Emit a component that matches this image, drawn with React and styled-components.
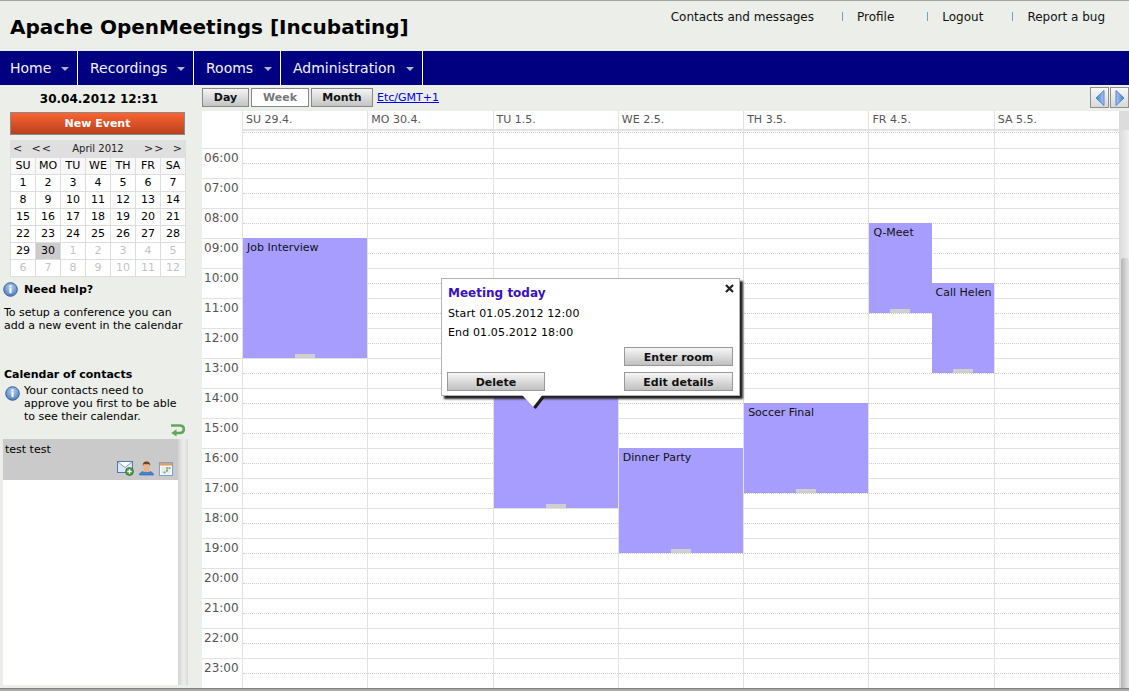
import React from 'react'
import styled, { createGlobalStyle } from 'styled-components'

const GlobalStyle = createGlobalStyle`
    html, body { margin:0; padding:0; height:100%; overflow:hidden; }
    body { font-family:"DejaVu Sans", Verdana, sans-serif; font-size:11px; color:#000; background:#eceee9; }
    * { box-sizing:border-box; }
`

const navItems = [
    { label: 'Home', width: 78, pad: 10 },
    { label: 'Recordings', width: 116, pad: 12 },
    { label: 'Rooms', width: 87, pad: 12 },
    { label: 'Administration', width: 142, pad: 12 },
]
const topLinks = [
    { label: 'Contacts and messages', gap: 0 },
    { label: 'Profile', gap: 28 },
    { label: 'Logout', gap: 33 },
    { label: 'Report a bug', gap: 29 },
]
const hours = ['06:00','07:00','08:00','09:00','10:00','11:00','12:00','13:00','14:00','15:00','16:00','17:00','18:00','19:00','20:00','21:00','22:00','23:00']
const dayNames = ['SU 29.4.','MO 30.4.','TU 1.5.','WE 2.5.','TH 3.5.','FR 4.5.','SA 5.5.']
const miniHead = ['SU','MO','TU','WE','TH','FR','SA']
const miniDays = [
    1,2,3,4,5,6,7,8,9,10,11,12,13,14,15,16,17,18,19,20,21,22,23,24,25,26,27,28,29,30,
    1,2,3,4,5,6,7,8,9,10,11,12,
]
const events = {
    0: [{ title: 'Job Interview', top: 107, height: 120 }],
    2: [{ title: '', top: 257, height: 120 }],
    3: [{ title: 'Dinner Party', top: 317, height: 105 }],
    4: [{ title: 'Soccer Final', top: 272, height: 90 }],
    5: [
        { title: 'Q-Meet', top: 92, height: 90, half: 'left' },
        { title: 'Call Helen', top: 152, height: 90, half: 'right' },
    ],
}

function InfoIcon() {
    return (
        <svg width="15" height="15" viewBox="0 0 15 15">
            <defs>
                <radialGradient id="infoFill" cx="50%" cy="35%" r="70%">
                    <stop offset="0" stopColor="#b9d2f0" />
                    <stop offset="1" stopColor="#3f74b8" />
                </radialGradient>
            </defs>
            <circle cx="7.5" cy="7.5" r="6.8" fill="url(#infoFill)" stroke="#3a659f" />
            <rect x="6.5" y="6.2" width="2" height="5" fill="#fff" />
            <rect x="6.5" y="3.4" width="2" height="1.8" fill="#fff" />
        </svg>
    )
}

function ReturnIcon() {
    return (
        <svg width="15" height="14" viewBox="0 0 15 14">
            <path d="M1 2.5h9c2.4 0 3.8 1.6 3.8 3.8S12.4 10 10 10H5.5" fill="none" stroke="#5fa85a" strokeWidth="2.6" />
            <path d="M6.5 6.2v7.4L1.2 10z" fill="#5fa85a" />
        </svg>
    )
}

function MailAddIcon() {
    return (
        <svg width="17" height="15" viewBox="0 0 17 15">
            <rect x="0.5" y="0.5" width="15" height="11" fill="#dce8f8" stroke="#4f78b4" />
            <path d="M1 1l7 5.5L15 1" fill="#fff" stroke="#7fa2d0" />
            <circle cx="12.5" cy="10.5" r="4" fill="#4b9a45" stroke="#2f6f2f" strokeWidth="0.7" />
            <path d="M10.3 10.5h4.4M12.5 8.3v4.4" stroke="#fff" strokeWidth="1.3" />
        </svg>
    )
}

function PersonIcon() {
    return (
        <svg width="15" height="15" viewBox="0 0 15 15">
            <path d="M0.5 14c0-1.8 1.6-2.6 3-3.4 1 1.4 7 1.4 8 0 1.4.8 3 1.6 3 3.4z" fill="#3f86e6" stroke="#2a5c9e" strokeWidth="0.6" />
            <rect x="5" y="8" width="5" height="3" fill="#e4b08a" />
            <circle cx="7.5" cy="5.2" r="3.4" fill="#e8b48a" />
            <path d="M3.8 5C3.6 1.6 5.4.6 7.5.6s3.9 1 3.7 4.4c-.6-1.4-1.2-1.9-2-2-1.4.4-3.2.4-4.2 0-.5.4-.9 1-1.2 2z" fill="#6f4220" />
        </svg>
    )
}

function CalendarIcon() {
    return (
        <svg width="14" height="14" viewBox="0 0 14 14">
            <rect x="0.5" y="0.5" width="13" height="13" fill="#f7f9fc" stroke="#7ba0d0" />
            <rect x="1" y="1" width="12" height="2.6" fill="#e0a060" />
            <path d="M2.5 5h9v6.5h-9z" fill="#e6ebf2" />
            <rect x="7" y="5" width="2" height="2" fill="#d9a45f" />
            <rect x="9.5" y="5" width="2" height="2" fill="#7fb27f" />
            <rect x="7" y="7.5" width="2" height="2" fill="#6fa86f" />
            <rect x="4.5" y="9.5" width="2" height="2" fill="#7fb27f" />
        </svg>
    )
}

function PagerArrow({ left }) {
    return (
        <svg width="12" height="16" viewBox="0 0 12 16">
            <defs>
                <linearGradient id={left ? 'pagerL' : 'pagerR'} x1="0" y1="0" x2="1" y2="0">
                    <stop offset="0" stopColor={left ? '#3f7fd4' : '#a8c8f0'} />
                    <stop offset="1" stopColor={left ? '#a8c8f0' : '#3f7fd4'} />
                </linearGradient>
            </defs>
            <path d={left ? 'M10 .5v15L2 8z' : 'M2 .5v15L10 8z'} fill={`url(#${left ? 'pagerL' : 'pagerR'})`} stroke="#4f86cc" />
        </svg>
    )
}

function CloseIcon() {
    return (
        <svg width="9" height="9" viewBox="0 0 9 9">
            <path d="M1 1l7 7M8 1L1 8" stroke="#222" strokeWidth="2.2" />
        </svg>
    )
}

function TailIcon() {
    return (
        <svg width="26" height="16" viewBox="0 0 26 16">
            <path d="M21 2L12.5 13" stroke="#1c1c1c" strokeWidth="3" fill="none" />
            <path d="M0 0h20.5L11 11.5z" fill="#fff" />
        </svg>
    )
}

function App() {
    return (
        <Page>
            <GlobalStyle />
            <TopLine />
            <Header>
                <Title>Apache OpenMeetings [Incubating]</Title>
                <TopLinks>
                    {topLinks.map(link => (
                        <TopLink key={link.label} $gap={link.gap}>{link.label}</TopLink>
                    ))}
                </TopLinks>
            </Header>
            <Nav>
                {navItems.map(item => (
                    <NavItem key={item.label} $width={item.width} $pad={item.pad}>
                        {item.label}
                        <Caret />
                    </NavItem>
                ))}
            </Nav>
            <Body>
                <Sidebar>
                    <Clock>30.04.2012 12:31</Clock>
                    <NewEvent>New Event</NewEvent>
                    <MiniCal>
                        <MiniHeader>
                            <span>&lt;</span>
                            <span>&lt;&lt;</span>
                            <MiniMonth>April 2012</MiniMonth>
                            <span>&gt;&gt;</span>
                            <span>&gt;</span>
                        </MiniHeader>
                        <MiniGrid>
                            {miniHead.map(d => <MiniHeadCell key={d}>{d}</MiniHeadCell>)}
                            {miniDays.map((d, i) => (
                                <MiniCell key={i} $muted={i >= 30} $today={i === 29}>{d}</MiniCell>
                            ))}
                        </MiniGrid>
                    </MiniCal>
                    <HelpRow>
                        <InfoIcon />
                        <strong>Need help?</strong>
                    </HelpRow>
                    <HelpText>To setup a conference you can add a new event in the calendar</HelpText>
                    <ContactsTitle>Calendar of contacts</ContactsTitle>
                    <ContactsInfo>
                        <InfoIcon />
                        <span>Your contacts need to approve you first to be able to see their calendar.</span>
                    </ContactsInfo>
                    <ReturnRow><ReturnIcon /></ReturnRow>
                    <ContactBox>
                        <ContactList>
                            <ContactRow>
                                test test
                                <ContactIcons>
                                    <MailAddIcon />
                                    <PersonIcon />
                                    <CalendarIcon />
                                </ContactIcons>
                            </ContactRow>
                        </ContactList>
                        <ContactScroll />
                    </ContactBox>
                </Sidebar>
                <Main>
                    <Toolbar>
                        <ViewButton $width={47}>Day</ViewButton>
                        <ViewButton $width={58} $active>Week</ViewButton>
                        <ViewButton $width={62}>Month</ViewButton>
                        <ZoneLink>Etc/GMT+1</ZoneLink>
                        <Pager>
                            <PagerButton><PagerArrow left /></PagerButton>
                            <PagerButton><PagerArrow /></PagerButton>
                        </Pager>
                    </Toolbar>
                    <CalendarWrap>
                        <Calendar>
                            <DayHeaders>
                                <TimeHeaderGap />
                                {dayNames.map(d => <DayHeader key={d}>{d}</DayHeader>)}
                            </DayHeaders>
                            <Grid>
                                <TimeColumn>
                                    <TimeStub />
                                    {hours.map(h => <TimeCell key={h}>{h}</TimeCell>)}
                                </TimeColumn>
                                {dayNames.map((d, i) => (
                                    <DayColumn key={d}>
                                        <StubCell />
                                        {hours.map(h => <HourCell key={h} />)}
                                        {(events[i] || []).map(ev => (
                                            <Event key={ev.top} $top={ev.top} $height={ev.height} $half={ev.half}>
                                                {ev.title}
                                                <Handle />
                                            </Event>
                                        ))}
                                    </DayColumn>
                                ))}
                            </Grid>
                            <Popup>
                                <PopupClose><CloseIcon /></PopupClose>
                                <PopupTitle>Meeting today</PopupTitle>
                                <PopupLine>Start 01.05.2012 12:00</PopupLine>
                                <PopupLine>End 01.05.2012 18:00</PopupLine>
                                <PopupActions>
                                    <DeleteButton $width={98}>Delete</DeleteButton>
                                    <ActionStack>
                                        <ActionButton $width={109}>Enter room</ActionButton>
                                        <ActionButton $width={109}>Edit details</ActionButton>
                                    </ActionStack>
                                </PopupActions>
                                <PopupTail><TailIcon /></PopupTail>
                            </Popup>
                        </Calendar>
                        <Scrollbar>
                            <ScrollCap />
                            <ScrollTrack>
                                <ScrollThumb />
                            </ScrollTrack>
                        </Scrollbar>
                    </CalendarWrap>
                </Main>
            </Body>
            <BottomStrip />
        </Page>
    )
}

export default App

const Page = styled.div`
    width:1129px;
    height:691px;
    display:flex;
    flex-direction:column;
    overflow:hidden;
    background:#eceee9;
`

const TopLine = styled.div`
    height:1px;
    background:#a5a5a5;
`

const Header = styled.div`
    height:50px;
    display:flex;
    justify-content:space-between;
    align-items:flex-start;
    padding:0 24px 0 10px;
`

const Title = styled.h1`
    margin:14px 0 0;
    font-size:20px;
    line-height:24px;
    font-weight:bold;
    white-space:nowrap;
`

const TopLinks = styled.div`
    display:flex;
    padding-top:9px;
`

const TopLink = styled.div`
    font-size:12px;
    line-height:14px;
    color:#111;
    white-space:nowrap;
    margin-left:${p => p.$gap}px;
    padding-left:${p => (p.$gap ? '15px' : '0')};
    position:relative;
    &::before {
        content:'';
        display:${p => (p.$gap ? 'block' : 'none')};
        position:absolute;
        left:0;
        top:2px;
        width:1px;
        height:9px;
        background:#6f9fd0;
    }
`

const Nav = styled.div`
    height:34px;
    display:flex;
    background:#000080;
`

const NavItem = styled.div`
    width:${p => p.$width}px;
    height:34px;
    padding-left:${p => p.$pad}px;
    border-right:1px solid #fff;
    color:#f2f2f8;
    font-size:14px;
    line-height:34px;
    position:relative;
    white-space:nowrap;
`

const Caret = styled.span`
    position:absolute;
    right:8px;
    top:16px;
    border-left:4px solid transparent;
    border-right:4px solid transparent;
    border-top:4px solid #b4b4c8;
`

const Body = styled.div`
    flex:1;
    display:flex;
    min-height:0;
`

const Sidebar = styled.div`
    width:202px;
    display:flex;
    flex-direction:column;
    padding-left:3px;
    height:100%;
`

const Clock = styled.div`
    width:194px;
    height:26px;
    margin-bottom:1px;
    padding-top:1px;
    font-size:12px;
    font-weight:bold;
    line-height:26px;
    text-align:center;
    margin-left:-1px;
`

const NewEvent = styled.div`
    width:175px;
    height:23px;
    margin-left:7px;
    border:1px solid #8a8a8a;
    background:linear-gradient(#fb6431, #b8401c);
    color:#fff;
    font-size:11px;
    font-weight:bold;
    line-height:21px;
    text-align:center;
`

const MiniCal = styled.div`
    width:176px;
    margin:5px 0 0 7px;
`

const MiniHeader = styled.div`
    height:18px;
    background:#dfdfdf;
    color:#222;
    font-size:11px;
    line-height:17px;
    display:flex;
    justify-content:space-between;
    padding:0 3px;
    letter-spacing:1px;
`

const MiniMonth = styled.span`
    font-size:10px;
    letter-spacing:0;
    margin:0 12px;
`

const MiniGrid = styled.div`
    display:grid;
    grid-template-columns:repeat(7, 1fr);
    gap:1px;
    padding:0 1px 1px;
    background:#dedede;
`

const MiniHeadCell = styled.div`
    height:16px;
    background:#f8f8f8;
    font-size:11px;
    line-height:16px;
    text-align:center;
`

const MiniCell = styled.div`
    height:16px;
    background:${p => (p.$today ? '#cccccc' : '#fff')};
    color:${p => (p.$muted ? '#c4c4c4' : '#000')};
    font-size:11px;
    line-height:16px;
    text-align:center;
`

const HelpRow = styled.div`
    display:flex;
    align-items:center;
    gap:6px;
    height:15px;
    margin-top:5px;
    font-size:11px;
`

const HelpText = styled.div`
    width:186px;
    margin:9px 0 0 1px;
    font-size:11px;
    line-height:13px;
`

const ContactsTitle = styled.div`
    margin:36px 0 0 1px;
    font-size:11px;
    font-weight:bold;
    line-height:13px;
`

const ContactsInfo = styled.div`
    display:flex;
    gap:4px;
    align-items:flex-start;
    margin:3px 0 0 2px;
    font-size:11px;
    line-height:13px;
    width:180px;
    svg { flex:none; margin-top:2px; }
`

const ReturnRow = styled.div`
    width:182px;
    height:14px;
    display:flex;
    justify-content:flex-end;
    align-items:flex-end;
`

const ContactBox = styled.div`
    width:185px;
    height:246px;
    margin-top:2px;
    display:flex;
`

const ContactList = styled.div`
    width:175px;
    background:#fff;
`

const ContactRow = styled.div`
    height:41px;
    background:#cacaca;
    padding:4px 2px;
    font-size:11px;
    line-height:13px;
    position:relative;
`

const ContactIcons = styled.div`
    position:absolute;
    right:5px;
    bottom:4px;
    display:flex;
    gap:5px;
    align-items:flex-end;
`

const ContactScroll = styled.div`
    width:10px;
    background:linear-gradient(90deg, #d4d4d4, #eeeeee 60%, #dadada);
`

const Main = styled.div`
    flex:1;
    display:flex;
    flex-direction:column;
    min-width:0;
`

const Toolbar = styled.div`
    height:26px;
    display:flex;
    align-items:flex-start;
    padding-top:3px;
    gap:2px;
`

const ViewButton = styled.div`
    width:${p => p.$width}px;
    height:19px;
    border:1px solid #888;
    background:${p => (p.$active ? '#fff' : 'linear-gradient(#f4f4f4, #c4c4c4)')};
    color:${p => (p.$active ? '#777' : '#111')};
    font-size:11px;
    font-weight:bold;
    line-height:17px;
    text-align:center;
`

const ZoneLink = styled.a`
    margin-left:2px;
    color:#0000ee;
    font-size:11px;
    line-height:14px;
    margin-top:3px;
    text-decoration:underline;
`

const Pager = styled.div`
    margin-left:auto;
    margin-top:-1px;
    display:flex;
    gap:1px;
`

const PagerButton = styled.div`
    width:19px;
    height:21px;
    border:1px solid #8f8f8f;
    background:linear-gradient(#f8f8f8, #d8d8d8);
    display:flex;
    align-items:center;
    justify-content:center;
`

const CalendarWrap = styled.div`
    flex:1;
    display:flex;
    min-height:0;
`

const Calendar = styled.div`
    width:917px;
    background:#fff;
    position:relative;
    overflow:hidden;
    color:#555;
`

const DayHeaders = styled.div`
    height:20px;
    display:grid;
    grid-template-columns:40px repeat(7, 1fr);
    border-bottom:2px solid #e2e2e2;
`

const TimeHeaderGap = styled.div`
    background:#fff;
    margin-bottom:-2px;
`

const DayHeader = styled.div`
    padding-left:3px;
    border-left:1px solid #e2e2e2;
    font-size:11px;
    line-height:18px;
    color:#555;
`

const Grid = styled.div`
    display:grid;
    grid-template-columns:40px repeat(7, 1fr);
`

const TimeColumn = styled.div`
    display:flex;
    flex-direction:column;
`

const TimeStub = styled.div`
    height:18px;
    border-bottom:1px solid #e2e2e2;
`

const TimeCell = styled.div`
    height:30px;
    padding:2px 0 0 2px;
    border-bottom:1px solid #e2e2e2;
    font-size:12px;
    line-height:14px;
    color:#555;
`

const DayColumn = styled.div`
    position:relative;
    border-left:1px solid #e2e2e2;
`

const StubCell = styled.div`
    height:18px;
    border-bottom:1px solid #e2e2e2;
    padding-top:1px;
    &::before {
        content:'';
        display:block;
        border-top:1px dotted #d0d0d0;
    }
`

const HourCell = styled.div`
    height:30px;
    padding-top:14px;
    border-bottom:1px solid #e2e2e2;
    &::before {
        content:'';
        display:block;
        border-top:1px dotted #d0d0d0;
    }
`

const Event = styled.div`
    position:absolute;
    top:${p => p.$top}px;
    height:${p => p.$height}px;
    left:${p => (p.$half === 'right' ? '50%' : '0')};
    right:${p => (p.$half === 'left' ? '50%' : '0')};
    background:#a69dff;
    color:#111;
    font-size:11px;
    line-height:13px;
    padding:3px 4px;
    white-space:nowrap;
    overflow:hidden;
`

const Handle = styled.div`
    position:absolute;
    left:50%;
    bottom:0;
    width:20px;
    height:4px;
    margin-left:-10px;
    background:#cfcfcf;
`

const Popup = styled.div`
    position:absolute;
    left:239px;
    top:167px;
    width:299px;
    height:118px;
    padding:7px 6px 4px;
    background:#fff;
    border:1px solid #b4b4b4;
    box-shadow:3px 3px 2px #222;
    color:#000;
    display:flex;
    flex-direction:column;
`

const PopupClose = styled.div`
    position:absolute;
    right:5px;
    top:5px;
    line-height:0;
`

const PopupTitle = styled.div`
    font-size:12px;
    font-weight:bold;
    line-height:14px;
    color:#3a10c0;
    margin-bottom:7px;
`

const PopupLine = styled.div`
    font-size:11px;
    line-height:13px;
    margin-bottom:6px;
    letter-spacing:0.14px;
`

const PopupActions = styled.div`
    margin-top:auto;
    display:flex;
    justify-content:space-between;
    align-items:flex-end;
`

const ActionStack = styled.div`
    display:flex;
    flex-direction:column;
    gap:6px;
`

const ActionButton = styled.div`
    width:${p => p.$width}px;
    height:19px;
    border:1px solid #999;
    background:linear-gradient(#f6f6f6, #c0c0c0);
    font-size:11px;
    font-weight:bold;
    line-height:19px;
    text-align:center;
    color:#111;
`

const DeleteButton = styled(ActionButton)`
    margin-left:-1px;
`

const PopupTail = styled.div`
    position:absolute;
    left:80px;
    top:116px;
    line-height:0;
`

const Scrollbar = styled.div`
    width:10px;
    display:flex;
    flex-direction:column;
`

const ScrollCap = styled.div`
    height:19px;
    background:#dcdcdc;
`

const ScrollTrack = styled.div`
    flex:1;
    padding-top:128px;
    background:linear-gradient(90deg, #dadada, #f0f0f0);
`

const ScrollThumb = styled.div`
    height:430px;
    margin-left:2px;
    background:linear-gradient(90deg, #b4b4b4, #d4d4d4 60%, #e4e4e4);
    border-radius:3px 3px 0 0;
`

const BottomStrip = styled.div`
    height:3px;
    flex:none;
    border-top:1px solid #808080;
    background:#a8a8a4;
`
